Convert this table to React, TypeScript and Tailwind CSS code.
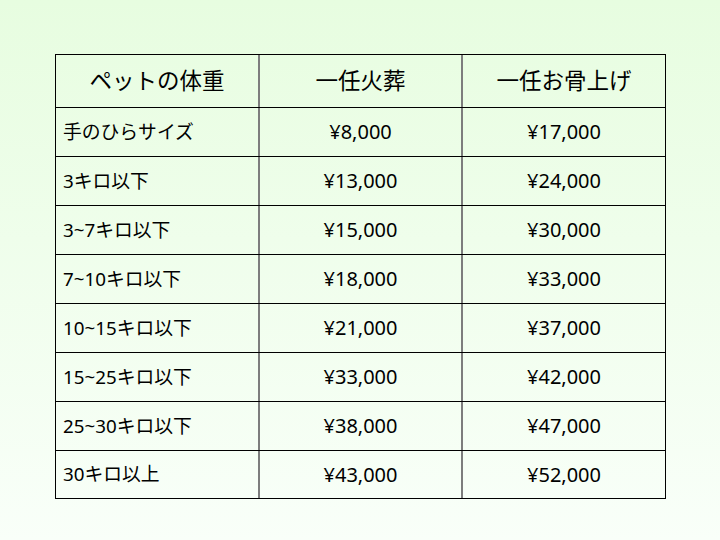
import React from "react";

const rows: [string, string, string][] = [
  ["手のひらサイズ", "¥8,000", "¥17,000"],
  ["3キロ以下", "¥13,000", "¥24,000"],
  ["3~7キロ以下", "¥15,000", "¥30,000"],
  ["7~10キロ以下", "¥18,000", "¥33,000"],
  ["10~15キロ以下", "¥21,000", "¥37,000"],
  ["15~25キロ以下", "¥33,000", "¥42,000"],
  ["25~30キロ以下", "¥38,000", "¥47,000"],
  ["30キロ以上", "¥43,000", "¥52,000"],
];

export default function App() {
  return (
    <div
      className="w-[720px] h-[540px] bg-gradient-to-b from-[#e7fde0] to-[#f9fff9] pt-[54px] pl-[55px] text-black"
      style={{ fontFamily: '"Noto Sans", "Noto Sans CJK JP", sans-serif' }}
    >
      <div className="w-[611px] border border-black">
        <div className="flex h-[53px] border-b border-black text-[22.5px]">
          <div className="w-[202px] flex items-center justify-center">ペットの体重</div>
          <div className="w-[203px] border-l-2 border-[#7d7d7d] flex items-center justify-center">一任火葬</div>
          <div className="w-[204px] border-l-2 border-[#7d7d7d] flex items-center justify-center">一任お骨上げ</div>
        </div>
        {rows.map((r, i) => (
          <div
            key={i}
            className={
              i === rows.length - 1
                ? "flex h-[47px]"
                : "flex h-[49px] border-b border-black"
            }
          >
            <div className="w-[202px] flex items-center pl-[7px] text-[18.8px]">{r[0]}</div>
            <div className="w-[203px] border-l-2 border-[#7d7d7d] flex items-center justify-center text-[20px]">{r[1]}</div>
            <div className="w-[204px] border-l-2 border-[#7d7d7d] flex items-center justify-center text-[20px]">{r[2]}</div>
          </div>
        ))}
      </div>
    </div>
  );
}
